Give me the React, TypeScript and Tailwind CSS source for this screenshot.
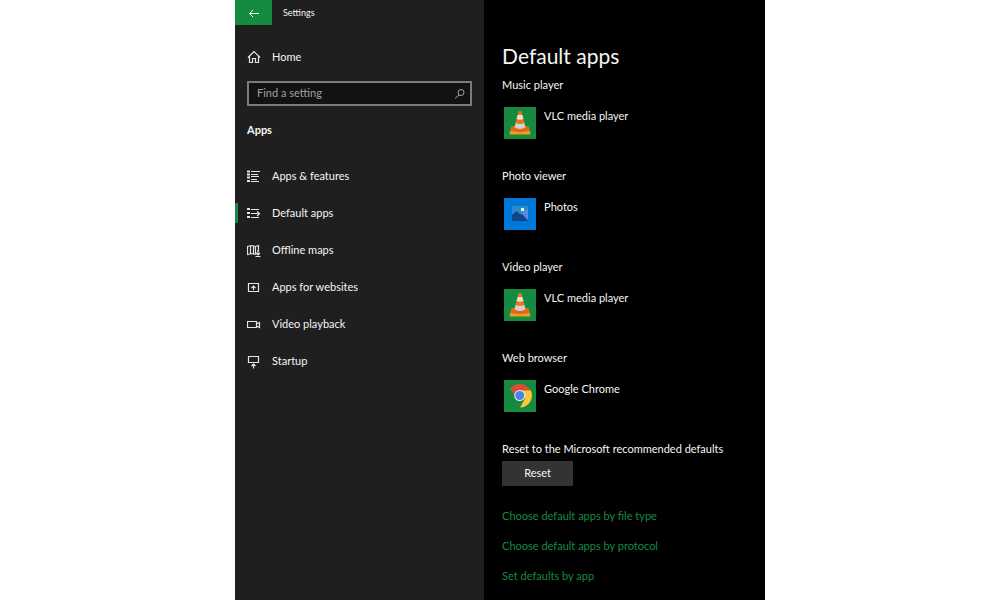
import type { ReactNode } from "react";

function Glyph({ children }: { children: ReactNode }) {
  return (
    <svg
      className="h-[14px] w-[14px] shrink-0"
      viewBox="0 0 14 14"
      fill="none"
      stroke="#e4e4e4"
      strokeWidth="1.2"
      aria-hidden="true"
    >
      {children}
    </svg>
  );
}

const navItems: { label: string; active?: boolean; icon: ReactNode }[] = [
  {
    label: "Apps & features",
    icon: (
      <Glyph>
        <path d="M0 1.5h3M0 4.5h3M0 7.5h3M0 11h3" strokeWidth="2" />
        <path d="M4 1.500h9M4 4.500h7M4 6.500h8M4 9.500h6M4 11.500h8" strokeWidth="1" />
      </Glyph>
    ),
  },
  {
    label: "Default apps",
    active: true,
    icon: (
      <Glyph>
        <path d="M0 2h3M0 6h3M0 10h3" strokeWidth="2" />
        <path d="M4 2.5h8M4 6.5h8.5M4 10.5h8M10 4.5l2.500 2L10 9" />
      </Glyph>
    ),
  },
  {
    label: "Offline maps",
    icon: (
      <Glyph>
        <path d="M8.5 10.5l-4-1-4 1v-8l4-1 4 1 3-1v6M3.5 1.500v8M6.500 2v8M8.500 2.500v8M11 6v5M9 9l2 2 2-2M8.500 12.500h5" />
      </Glyph>
    ),
  },
  {
    label: "Apps for websites",
    icon: (
      <Glyph>
        <path d="M1.5 2.5h10v8h-10zM6.5 9V5M4.5 7l2-2 2 2" />
      </Glyph>
    ),
  },
  {
    label: "Video playback",
    icon: (
      <Glyph>
        <path d="M.5 3.500h9v6h-9zM9.500 6l3-1.500v5L9.500 8" />
      </Glyph>
    ),
  },
  {
    label: "Startup",
    icon: (
      <Glyph>
        <path d="M1.5 1.5h10v6h-10zM6.5 13.5V9M4.5 11l2-2 2 2" />
      </Glyph>
    ),
  },
];

function VlcIcon() {
  return (
    <svg className="h-8 w-8 shrink-0 bg-[#158b40]" viewBox="0 0 32 32" aria-hidden="true">
      <path d="M8 19h16l2.5 7.500q0 1-1 1h-19q-1 0-1-1z" fill="#f39a1e" />
      <path d="M8 19h16l1.500 4.500q-9.500 3-19 0z" fill="#dc6a1d" />
      <path d="M14.500 4.500q1.500-1.300 3 0L21.500 20q-5.500 3.500-11 0z" fill="#e9761c" />
      <path d="M13.600 8h4.800l1 4q-3.400 1.500-6.800 0z" fill="#e6e3df" />
      <path d="M11.700 16q4.300 2 8.600 0l1.200 4.300q-5.500 3.200-11 0z" fill="#d5d2cf" />
    </svg>
  );
}

function PhotosIcon() {
  return (
    <svg className="h-8 w-8 shrink-0 bg-[#0078d7]" viewBox="0 0 32 32" aria-hidden="true">
      <path d="M8 8h16v15H8z" fill="#2b8bd0" />
      <path d="M17 17l3-4 4-2v12h-2z" fill="#5b8ae0" />
      <path d="M8 17l4-3.500h1.500l3 3 1.500-.5 6 6.500v.5H8z" fill="#0c4889" />
      <path d="M17 10h3v3h-3z" fill="#f4f1ea" />
    </svg>
  );
}

function ChromeIcon() {
  return (
    <svg className="h-8 w-8 shrink-0 bg-[#158b40]" viewBox="0 0 32 32" aria-hidden="true">
      <path d="M16 10h10.600A12 12 0 0 1 16 27.500l5-9z" fill="#fbc83c" />
      <path d="M6 9A12 12 0 0 1 26.600 10.500H16a5.500 5.500 0 0 0-5.500 4z" fill="#d5503a" />
      <circle cx="15.700" cy="15.500" r="5.500" fill="#e9eef5" />
      <circle cx="15.700" cy="15.500" r="4.500" fill="#4c83e6" />
    </svg>
  );
}

const defaults = [
  { kind: "Music player", app: "VLC media player", icon: <VlcIcon /> },
  { kind: "Photo viewer", app: "Photos", icon: <PhotosIcon /> },
  { kind: "Video player", app: "VLC media player", icon: <VlcIcon /> },
  { kind: "Web browser", app: "Google Chrome", icon: <ChromeIcon /> },
];

const links = [
  "Choose default apps by file type",
  "Choose default apps by protocol",
  "Set defaults by app",
];

function Sidebar() {
  return (
    <aside className="w-[47%] shrink-0 bg-[#1f1f1f]">
      <header className="flex h-[25px] items-center">
        <button
          type="button"
          aria-label="Back"
          className="flex h-full w-[37px] items-center justify-center bg-[#158b40]"
        >
          <svg className="h-3 w-3" viewBox="0 0 12 12" fill="none" stroke="#fff" aria-hidden="true">
            <path d="M11 6.500H1.500M5 3L1.500 6.500 5 10" />
          </svg>
        </button>
        <span className="ml-[11px] text-[9px]">Settings</span>
      </header>

      <a href="#home" className="mt-[14px] flex h-9 items-center gap-[11px] pl-3">
        <Glyph>
          <path d="M1 7.500l6-6 6 6M2.500 6.500v6h3v-4h3v4h3v-6" />
        </Glyph>
        Home
      </a>

      <label className="mx-3 mt-[6px] flex h-[25px] items-center border-2 border-[#7c7c7c] bg-[#121212] pr-1 pl-2">
        <input
          type="text"
          aria-label="Find a setting"
          placeholder="Find a setting"
          className="min-w-0 flex-1 bg-transparent outline-none placeholder:text-[#a0a0a0]"
        />
        <svg className="h-3 w-3" viewBox="0 0 12 12" fill="none" stroke="#a8a8a8" aria-hidden="true">
          <circle cx="7" cy="4.500" r="3" />
          <path d="M5 7 1 10.500" />
        </svg>
      </label>

      <h2 className="mt-[14px] pl-3 leading-5 font-bold">Apps</h2>

      <nav className="mt-[18px]">
        {navItems.map((item) => (
          <a
            key={item.label}
            href="#"
            aria-current={item.active ? "page" : undefined}
            className="relative flex h-[37px] items-center gap-[11px] pl-3"
          >
            {item.active && (
              <span className="absolute top-2 left-0 h-5 w-[3px] bg-[#158b40]" />
            )}
            {item.icon}
            {item.label}
          </a>
        ))}
      </nav>
    </aside>
  );
}

export default function App() {
  return (
    <div className="min-h-screen bg-white">
      <div className="mx-auto flex min-h-screen w-full max-w-[530px] bg-black font-['Lato',sans-serif] text-[11px] text-[#f5f5f5]">
        <Sidebar />

        <main className="min-w-0 flex-1 pt-10 pl-[18px]">
          <h1 className="text-[21px] leading-8">Default apps</h1>

          <div className="mt-[3px]">
            {defaults.map((item) => (
              <section key={item.kind} className="pb-[27px]">
                <h2 className="leading-5">{item.kind}</h2>
                <button type="button" className="mt-3 ml-[2px] flex items-start gap-2 text-left">
                  {item.icon}
                  <span className="leading-[18px]">{item.app}</span>
                </button>
              </section>
            ))}
          </div>

          <h2 className="leading-5">Reset to the Microsoft recommended defaults</h2>
          <button type="button" className="mt-[2px] block h-[25px] w-[71px] bg-[#333333]">
            Reset
          </button>

          <ul className="mt-5 space-y-[10px] leading-5 text-[#158b40]">
            {links.map((link) => (
              <li key={link}>
                <a href="#">{link}</a>
              </li>
            ))}
          </ul>
        </main>
      </div>
    </div>
  );
}
